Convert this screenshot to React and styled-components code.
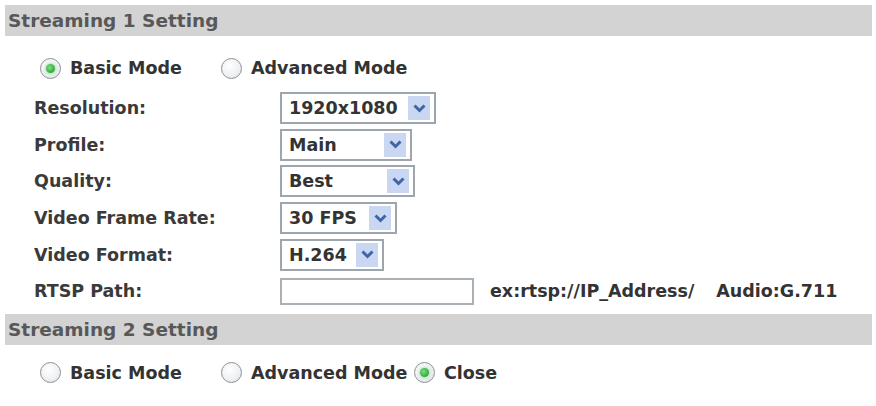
import React from "react";
import styled, { createGlobalStyle } from "styled-components";

const GlobalStyle = createGlobalStyle`
  html, body {
    margin: 0;
    padding: 0;
    background: #fff;
  }
  body {
    font-family: "DejaVu Sans", "Liberation Sans", sans-serif;
    font-weight: bold;
    color: #333;
  }
`;

const Page = styled.div`
  width: 876px;
  height: 406px;
  padding: 5px 4px 0 5px;
  box-sizing: border-box;
  overflow: hidden;
`;

const SectionHeader = styled.div`
  height: 31px;
  background: #d3d3d3;
  color: #585858;
  font-size: 18.5px;
  display: flex;
  align-items: center;
  padding-left: 3px;
  margin-top: ${p => (p.second ? "4px" : "0")};
`;

const RadioRow = styled.div`
  height: ${p => p.height}px;
  display: flex;
  align-items: center;
  padding-left: 35px;
  padding-top: ${p => p.top || 0}px;
  box-sizing: border-box;
`;

const RadioOption = styled.label`
  display: flex;
  align-items: center;
  gap: 9px;
  font-size: 17.5px;
  color: #333;
  width: ${p => (p.width ? `${p.width}px` : "auto")};
  flex-shrink: 0;
`;

const Circle = styled.span`
  width: 21px;
  height: 21px;
  border-radius: 50%;
  border: 1.5px solid #8b9196;
  background: radial-gradient(circle at 40% 35%, #ffffff 0%, #eef0f2 60%, #d6dadd 100%);
  display: flex;
  align-items: center;
  justify-content: center;
  box-sizing: border-box;
  flex-shrink: 0;

  &::after {
    content: "";
    display: ${p => (p.checked ? "block" : "none")};
    width: 9px;
    height: 9px;
    border-radius: 50%;
    background: radial-gradient(circle at 40% 40%, #7be07d 0%, #2fa83a 70%, #1f8a2a 100%);
    box-shadow: 0 0 3px 1px rgba(100, 200, 110, 0.5);
  }
`;

const Radio = ({ checked, width, children }) => (
  <RadioOption width={width}>
    <Circle checked={checked} />
    {children}
  </RadioOption>
);

const Form = styled.div`
  display: grid;
  grid-template-columns: 246px 1fr;
  grid-auto-rows: 36.6px;
  padding-left: 29px;
`;

const Label = styled.div`
  font-size: 17.5px;
  color: #3a3a3a;
  display: flex;
  align-items: center;
`;

const Cell = styled.div`
  display: flex;
  align-items: center;
`;

const SelectBox = styled.div`
  width: ${p => p.width}px;
  height: 32px;
  border: 2px solid #9ea6ad;
  box-sizing: border-box;
  background: #fff;
  display: flex;
  align-items: center;
  justify-content: space-between;
  padding: 2px 4px 2px 7px;
  font-size: 17.5px;
  color: #333;
`;

const ArrowButton = styled.span`
  width: 22px;
  height: 24px;
  background: #c9d7f2;
  display: flex;
  align-items: center;
  justify-content: center;
`;

const Select = ({ width, value }) => (
  <SelectBox width={width}>
    <span>{value}</span>
    <ArrowButton>
      <svg width="13" height="9" viewBox="0 0 13 9">
        <path
          d="M1.5 1.5 L6.5 6.5 L11.5 1.5"
          fill="none"
          stroke="#3f64a8"
          strokeWidth="3"
        />
      </svg>
    </ArrowButton>
  </SelectBox>
);

const TextInput = styled.div`
  width: 194px;
  height: 27px;
  border: 2px solid #a9b0b6;
  box-sizing: border-box;
  background: #fff;
`;

const Hint = styled.span`
  font-size: 17.5px;
  color: #333;
  margin-left: ${p => p.gap}px;
`;

const rows = [
  { label: "Resolution:", value: "1920x1080", width: 156 },
  { label: "Profile:", value: "Main", width: 132 },
  { label: "Quality:", value: "Best", width: 135 },
  { label: "Video Frame Rate:", value: "30 FPS", width: 117 },
  { label: "Video Format:", value: "H.264", width: 104 }
];

const App = () => (
  <Page>
    <GlobalStyle />
    <SectionHeader>Streaming 1 Setting</SectionHeader>
    <RadioRow height={54} top={10}>
      <Radio checked width={181}>Basic Mode</Radio>
      <Radio>Advanced Mode</Radio>
    </RadioRow>
    <Form>
      {rows.map(r => (
        <React.Fragment key={r.label}>
          <Label>{r.label}</Label>
          <Cell>
            <Select width={r.width} value={r.value} />
          </Cell>
        </React.Fragment>
      ))}
      <Label>RTSP Path:</Label>
      <Cell>
        <TextInput />
        <Hint gap={16}>ex:rtsp://IP_Address/</Hint>
        <Hint gap={22}>Audio:G.711</Hint>
      </Cell>
    </Form>
    <SectionHeader second>Streaming 2 Setting</SectionHeader>
    <RadioRow height={56}>
      <Radio width={181}>Basic Mode</Radio>
      <Radio width={193}>Advanced Mode</Radio>
      <Radio checked>Close</Radio>
    </RadioRow>
  </Page>
);

export default App;
